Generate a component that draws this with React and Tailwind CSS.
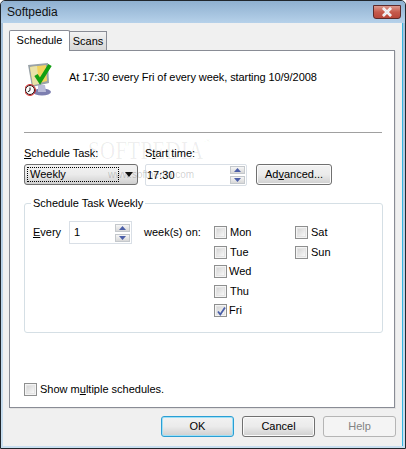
import React from "react";

const font = { fontFamily: '"Liberation Sans", Arial, sans-serif' };

function Check({ checked }) {
  return (
    <span className="relative flex h-[13px] w-[13px] shrink-0 items-center justify-center border border-[#8e8f8f] bg-[#f4f4f4] p-px">
      <span className="h-full w-full border border-[#e4e4e4] bg-gradient-to-br from-[#d6d6d6] to-[#f8f8f8]" />
      {checked && (
        <svg viewBox="0 0 11 11" className="absolute left-px top-px h-[11px] w-[11px]">
          <path d="M2 5.5 L4.3 8.5 L9 1.5" fill="none" stroke="#4a5fa8" strokeWidth="1.8" />
        </svg>
      )}
    </span>
  );
}

function Day({ label, checked, shift }) {
  return (
    <div className="flex h-[13px] items-center gap-[3px]">
      <Check checked={checked} />
      <span className={shift ? "-ml-px" : ""}>{label}</span>
    </div>
  );
}

function Spin() {
  return (
    <div className="flex w-[15px] flex-col gap-[2px]">
      <div className="flex h-[8px] items-center justify-center border border-[#c4c8cc] bg-gradient-to-b from-[#f6f6f6] to-[#d8d8d8]">
        <svg width="7" height="4" viewBox="0 0 7 4"><path d="M3.5 0 L7 4 H0 Z" fill="#4c5fa8" /></svg>
      </div>
      <div className="flex h-[8px] items-center justify-center border border-[#c4c8cc] bg-gradient-to-b from-[#f6f6f6] to-[#d8d8d8]">
        <svg width="7" height="4" viewBox="0 0 7 4"><path d="M0 0 H7 L3.5 4 Z" fill="#4c5fa8" /></svg>
      </div>
    </div>
  );
}

function Button({ children, w, primary, disabled }) {
  return (
    <div
      className={
        "flex h-[21px] items-center justify-center rounded-[3px] border " +
        w +
        " " +
        (primary
          ? "border-[#2a9ed4] bg-gradient-to-b from-[#f2f2f2] via-[#ebebeb] to-[#cfcfcf] shadow-[inset_0_0_0_1px_#9fe0f6]"
          : disabled
          ? "border-[#b5b5b5] bg-[#f4f4f4] text-[#838383]"
          : "border-[#707070] bg-gradient-to-b from-[#f2f2f2] via-[#ebebeb] to-[#cfcfcf] shadow-[inset_0_0_0_1px_#fbfbfb]")
      }
    >
      {children}
    </div>
  );
}

function ScheduleIcon() {
  return (
    <svg width="30" height="34" viewBox="0 0 30 34" className="ml-px shrink-0">
      <ellipse cx="17" cy="29" rx="9" ry="3.5" fill="#7d7fb0" />
      <path d="M13 22 L20 22 L21 29 L13 29 Z" fill="#b9bbd8" />
      <path d="M3 2 L23 0 L24 20 L7 24 Z" fill="#9aa3a8" />
      <path d="M5 4 L21 2 L22 18 L8 22 Z" fill="#f2d35c" />
      <path d="M5 4 L12 3 L14 21 L8 22 Z" fill="#e9e2a8" />
      <path d="M11 12 L15 18 L25 2" fill="none" stroke="#12a012" strokeWidth="4" />
      <circle cx="5" cy="27" r="4.5" fill="#fff" stroke="#111" strokeWidth="1" />
      <circle cx="5" cy="27" r="5.4" fill="none" stroke="#d01818" strokeWidth="1" />
      <path d="M5 24.5 V27.5 L2.8 28.8" fill="none" stroke="#111" strokeWidth="1" />
    </svg>
  );
}

export default function App() {
  return (
    <div
      style={font}
      className="relative flex h-[449px] w-[406px] flex-col overflow-hidden rounded-t-[5px] border border-[#20262c] bg-gradient-to-b from-[#a3bfda] to-[#c9dff0] text-[11px] leading-none text-black"
    >
      <div className="flex h-[22px] shrink-0 items-start justify-between bg-gradient-to-b from-[#8fb0d0] to-[#b6d1ea] pl-[6px] pr-[4px]">
        <span className="pt-[5px] text-[12px] text-[#111]">Softpedia</span>
        <div className="mt-[4px] flex h-[14px] w-[28px] items-center justify-center rounded-b-[3px] border border-[#5c2a2a] bg-gradient-to-b from-[#dc9a8e] via-[#c65a4c] to-[#b8473a]">
          <svg width="12" height="10" viewBox="0 0 12 10">
            <path d="M2 1 L10 9 M10 1 L2 9" stroke="#fff" strokeWidth="2.6" />
            <path d="M2 1 L10 9 M10 1 L2 9" stroke="#e8e8ee" strokeWidth="1.4" />
          </svg>
        </div>
      </div>

      <div className="mx-[2px] mb-[2px] flex flex-1 flex-col border-r border-[#37b5e0] bg-[#f0f0f0] pl-[6px] pr-[7px]">
        {/* tabs */}
        <div className="relative z-10 flex h-[27px] items-end">
          <div className="-mb-px flex h-[21px] w-[61px] items-start justify-center rounded-t-[2px] border border-b-0 border-[#898c95] bg-white pt-[4px]">
            Schedule
          </div>
          <div className="-ml-px flex h-[19px] w-[38px] items-start justify-center border border-b-0 border-[#898c95] bg-gradient-to-b from-[#f2f2f2] to-[#d8d8d8] pt-[4px]">
            Scans
          </div>
        </div>

        {/* panel */}
        <div className="flex h-[358px] w-[386px] flex-col border border-[#898c95] bg-white pl-[14px] pr-[12px] shadow-[1px_1px_0_#e2e2e2]">
          <div className="flex h-[81px] items-start pt-[12px]">
            <ScheduleIcon />
            <span className="ml-[14px] mt-[9px] tracking-[-0.08px]">At 17:30 every Fri of every week, starting 10/9/2008</span>
          </div>
          <div className="h-px w-[358px] bg-[#a0a0a0]" />

          <div className="mt-[14px] flex h-[12px] items-center">
            <span className="w-[121px]"><u>S</u>chedule Task:</span>
            <span>S<u>t</u>art time:</span>
          </div>

          <div className="mt-[5px] flex items-start">
            <div className="flex h-[21px] w-[114px] items-center rounded-[3px] border border-[#707070] bg-gradient-to-b from-[#f2f2f2] via-[#ebebeb] to-[#cfcfcf] p-[2px]">
              <span className="flex h-full w-[92px] items-center border border-dotted border-black pl-[2px]">Weekly</span>
              <svg width="8" height="5" viewBox="0 0 8 5" className="ml-[6px]"><path d="M0 0 H8 L4 5 Z" fill="#111" /></svg>
            </div>
            <div className="ml-[7px] flex h-[22px] w-[102px] items-center justify-between rounded-[2px] border border-[#d9dfe6] bg-white pl-px pr-px">
              <span>17:30</span>
              <Spin />
            </div>
            <div className="ml-[9px]">
              <Button w="w-[76px]">Ad<u>v</u>anced...</Button>
            </div>
          </div>

          {/* group */}
          <div className="relative mt-[17px] h-[130px] w-[359px] rounded-[3px] border border-[#d5dfe5] pl-[8px]">
            <span className="absolute -top-[6px] left-[6px] bg-white px-[2px]">Schedule Task Weekly</span>
            <div className="flex items-start pt-[17px]">
              <span className="mt-[6px] w-[36px]"><u>E</u>very</span>
              <div className="flex h-[23px] w-[63px] items-center justify-between border border-[#d9dfe6] bg-white pl-[4px] pr-[1px]">
                <span>1</span>
                <Spin />
              </div>
              <span className="ml-[12px] mt-[6px] w-[70px]">week(s) on:</span>
              <div className="mt-[5px] flex w-[81px] flex-col gap-[6.5px]">
                <Day label="Mon" />
                <Day label="Tue" />
                <Day label="Wed" shift />
                <Day label="Thu" />
                <Day label="Fri" checked shift />
              </div>
              <div className="mt-[5px] flex flex-col gap-[6.5px]">
                <Day label="Sat" />
                <Day label="Sun" />
              </div>
            </div>
          </div>

          <div className="mt-[50px] flex items-center gap-[3px]">
            <Check />
            <span>Show m<u>u</u>ltiple schedules.</span>
          </div>
        </div>

        {/* footer */}
        <div className="-mr-px mt-[8px] flex justify-end gap-[8px]">
          <Button w="w-[73px]" primary>OK</Button>
          <Button w="w-[73px]">Cancel</Button>
          <Button w="w-[73px]" disabled>Help</Button>
        </div>
      </div>

      {/* watermark */}
      <div className="pointer-events-none absolute left-[87px] top-[137px] flex flex-col">
        <span className="origin-left scale-x-[0.8] whitespace-nowrap text-[26px] leading-none tracking-[0.5px] text-black/[0.07] [font-family:'Liberation_Serif',serif]">
          SOFTPEDIA<span className="align-top text-[8px]">™</span>
        </span>
        <span className="ml-[20px] mt-[6px] text-[10px] text-black/20">www.softpedia.com</span>
      </div>
    </div>
  );
}
